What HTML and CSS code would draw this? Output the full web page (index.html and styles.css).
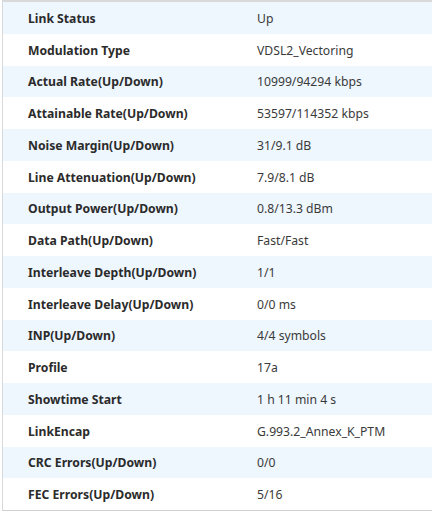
FILE: index.html
```html
<!DOCTYPE html>
<html>
<head>
<meta charset="utf-8">
<link rel="stylesheet" href="styles.css">
</head>
<body>
<div class="panel">
  <div class="row alt"><div class="label">Link Status</div><div class="value">Up</div></div>
  <div class="row"><div class="label">Modulation Type</div><div class="value">VDSL2_Vectoring</div></div>
  <div class="row alt"><div class="label">Actual Rate(Up/Down)</div><div class="value">10999/94294 kbps</div></div>
  <div class="row"><div class="label">Attainable Rate(Up/Down)</div><div class="value">53597/114352 kbps</div></div>
  <div class="row alt"><div class="label">Noise Margin(Up/Down)</div><div class="value">31/9.1 dB</div></div>
  <div class="row"><div class="label">Line Attenuation(Up/Down)</div><div class="value">7.9/8.1 dB</div></div>
  <div class="row alt"><div class="label">Output Power(Up/Down)</div><div class="value">0.8/13.3 dBm</div></div>
  <div class="row"><div class="label">Data Path(Up/Down)</div><div class="value">Fast/Fast</div></div>
  <div class="row alt"><div class="label">Interleave Depth(Up/Down)</div><div class="value">1/1</div></div>
  <div class="row"><div class="label">Interleave Delay(Up/Down)</div><div class="value">0/0 ms</div></div>
  <div class="row alt"><div class="label">INP(Up/Down)</div><div class="value">4/4 symbols</div></div>
  <div class="row"><div class="label">Profile</div><div class="value">17a</div></div>
  <div class="row alt"><div class="label">Showtime Start</div><div class="value">1 h 11 min 4 s</div></div>
  <div class="row"><div class="label">LinkEncap</div><div class="value">G.993.2_Annex_K_PTM</div></div>
  <div class="row alt"><div class="label">CRC Errors(Up/Down)</div><div class="value">0/0</div></div>
  <div class="row"><div class="label">FEC Errors(Up/Down)</div><div class="value">5/16</div></div>
</div>
</body>
</html>
```
FILE: styles.css
```css
html, body {
  margin: 0;
  padding: 0;
  background: #ffffff;
}
body {
  font-family: "Noto Sans", "Open Sans", sans-serif;
  font-size: 12.2px;
  color: #333333;
}
.panel {
  margin-left: 2px;
  border-top: 2px solid #d9d9d9;
  border-left: 1px solid #d9d9d9;
  border-bottom: 1px solid #d0d0d0;
  display: flex;
  flex-direction: column;
}
.row {
  display: grid;
  grid-template-columns: 254px 1fr;
  height: 31.75px;
  align-items: center;
  background: #ffffff;
}
.row.alt {
  background: #eef6fe;
}
.label,
.value {
  padding-top: 1px;
}
.label {
  padding-left: 25px;
  font-weight: bold;
  color: #2b2b2b;
}
.value {
  color: #3a3a3a;
}
```
